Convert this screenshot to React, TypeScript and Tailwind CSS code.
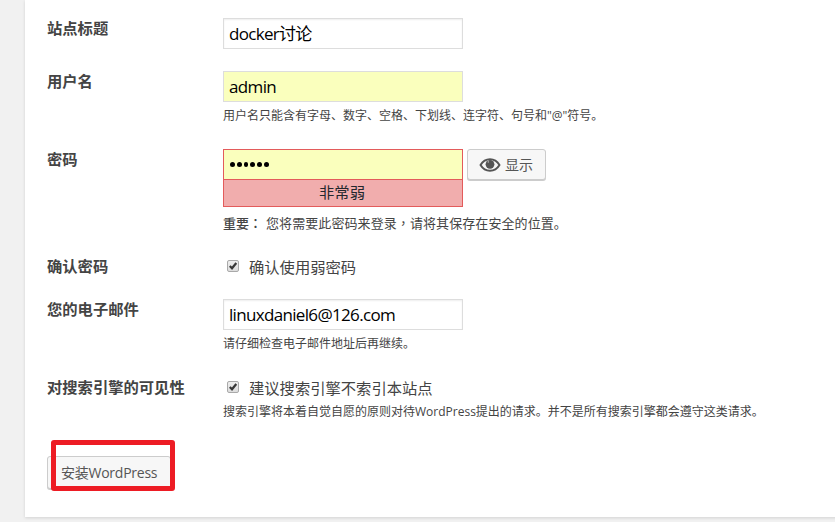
import type { ReactNode } from "react";

function Row({ label, height, children }: { label: string; height: string; children: ReactNode }) {
  return (
    <div className={`flex ${height}`}>
      <div className="w-[176px] shrink-0 whitespace-nowrap text-[15.3px] font-bold leading-[20px] text-[#444]">{label}</div>
      <div className="flex flex-col items-start whitespace-nowrap">{children}</div>
    </div>
  );
}

function Field({ value, tint, spacing }: { value: string; tint?: boolean; spacing: string }) {
  return (
    <div
      className={`h-[31px] w-[240px] border border-[#ddd] pl-[5px] text-[17px] leading-[30px] text-black ${spacing} ${
        tint ? "bg-[#faffbd]" : "bg-white shadow-[inset_0_1px_2px_rgba(0,0,0,0.07)]"
      }`}
    >
      {value}
    </div>
  );
}

function Check({ text }: { text: string }) {
  return (
    <div className="flex h-[22px] items-center pl-1">
      <span className="mr-[10px] mb-[2px] flex h-3 w-3 items-center justify-center rounded-[2px] border border-[#a9a9a9] bg-linear-to-b from-[#eee] to-[#ddd]">
        <svg width="10" height="10" viewBox="0 0 10 10" fill="none">
          <path d="M1.800 5 4 7.300 8.300 2" stroke="#383838" strokeWidth="2.2" />
        </svg>
      </span>
      <span className="text-[15.3px] leading-[22px] text-[#444]">{text}</span>
    </div>
  );
}

export default function App() {
  return (
    <div className="h-[522px] w-[835px] overflow-hidden bg-[#f1f1f1] pl-[25px] font-['Open_Sans','Noto_Sans_CJK_SC',sans-serif] text-[#444]">
      <div className="h-[517px] w-[850px] bg-white pt-[18px] pl-[22px] shadow-[0_1px_3px_rgba(0,0,0,0.13)]">
        <Row label="站点标题" height="h-[53px]">
          <Field value="docker讨论" spacing="tracking-[-0.7px]" />
        </Row>
        <Row label="用户名" height="h-[78px]">
          <Field value="admin" tint spacing="tracking-[-0.65px]" />
          <p className="mt-[5px] text-[12px] leading-[18px]">用户名只能含有字母、数字、空格、下划线、连字符、句号和"@"符号。</p>
        </Row>
        <Row label="密码" height="h-[107px]">
          <div className="flex items-start">
            <div className="w-[240px] border border-[#e35b5b]">
              <div className="flex h-[29px] items-center gap-[2px] bg-[#faffbd] pl-[6px]">
                {[0, 1, 2, 3, 4, 5].map((n) => (
                  <span key={n} className="h-[4.8px] w-[4.8px] rounded-full bg-black" />
                ))}
              </div>
              <div className="h-[27px] border-t border-[#e35b5b] bg-[#f1adad] pr-[2px] text-center text-[15.3px] leading-[25px] text-[#23282d]">
                非常弱
              </div>
            </div>
            <div className="ml-1 flex h-[31px] w-[79px] items-center rounded-[3px] border border-[#ccc] bg-[#f7f7f7] pl-[11px] text-[14px] text-[#555] shadow-[0_1px_0_#ccc]">
              <svg width="22" height="16" viewBox="0 0 22 16" className="mr-[4px]">
                <path d="M1.500 8C4 3.900 7 2.300 11 2.300S18 3.900 20.500 8C18 12.100 15 13.700 11 13.700S4 12.100 1.500 8Z" fill="#f7f7f7" stroke="#555" strokeWidth="2" strokeLinejoin="round" />
                <circle cx="11" cy="7.3" r="4.4" fill="#555" />
                <path d="M9.300 3.500v2.300" stroke="#aaa" strokeWidth="1.2" />
              </svg>
              显示
            </div>
          </div>
          <p className="mt-[7px] flex text-[13px] leading-[18px]">
            <span className="w-[43px] font-medium">
              重要<span className="font-['Noto_Sans_CJK_TC',sans-serif]">：</span>
            </span>
            <span className="tracking-[0.08px]">
              您将需要此密码来登录<span className="font-['Noto_Sans_CJK_TC',sans-serif]" lang="zh-TW">，</span>请将其保存在安全的位置。
            </span>
          </p>
        </Row>
        <Row label="确认密码" height="h-[43px]">
          <Check text="确认使用弱密码" />
        </Row>
        <Row label="您的电子邮件" height="h-[78px]">
          <Field value="linuxdaniel6@126.com" spacing="tracking-[-0.67px]" />
          <p className="mt-[5px] text-[12px] leading-[18px]">请仔细检查电子邮件地址后再继续。</p>
        </Row>
        <Row label="对搜索引擎的可见性" height="h-[79px]">
          <Check text="建议搜索引擎不索引本站点" />
          <p className="mt-[4px] text-[12px] leading-[18px]">
            搜索引擎将本着自觉自愿的原则对待WordPress提出的请求。并不是所有搜索引擎都会遵守这类请求。
          </p>
        </Row>
        <div className="relative h-[34px] w-[124px]">
          <div className="h-[33px] rounded-[3px] border border-[#ccc] bg-[#f7f7f7] pl-[13px] text-[14px] leading-[32px] tracking-[-0.25px] whitespace-nowrap text-[#555] shadow-[0_1px_0_#ccc]">
            安装WordPress
          </div>
          <div className="absolute top-[-16px] left-1 h-[51px] w-[124px] rounded-[3px] border-[5px] border-[#ed1c24]" />
        </div>
      </div>
    </div>
  );
}
